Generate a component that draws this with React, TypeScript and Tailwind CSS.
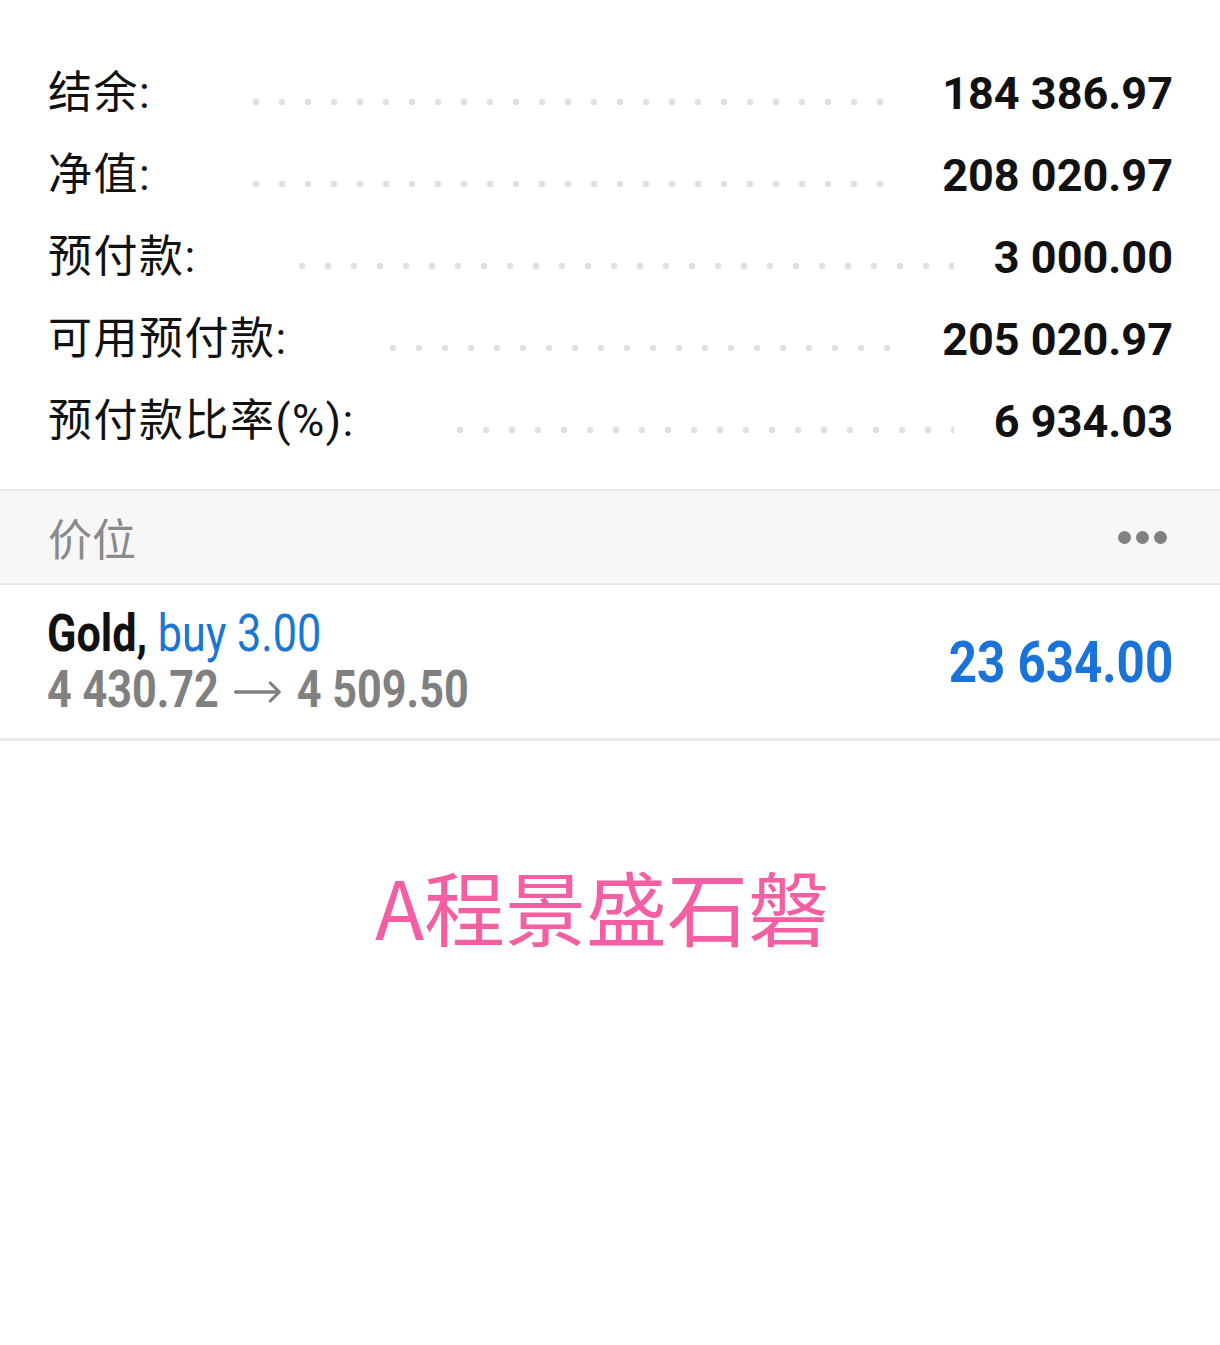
import React from 'react';

const rows = [
  { label: '结余:', value: '184 386.97' },
  { label: '净值:', value: '208 020.97' },
  { label: '预付款:', value: '3 000.00' },
  { label: '可用预付款:', value: '205 020.97' },
  { label: '预付款比率(%):', value: '6 934.03' },
];

export default function App() {
  return (
    <div className="w-[1220px] h-[1345px] bg-white overflow-hidden">
      {/* account summary */}
      <div className="pt-[52px] pb-[27px]">
        {rows.map((r) => (
          <div key={r.label} className="h-[82px] pl-[48px] pr-[47px] flex items-center">
            <div className="text-[44px] text-[#111] leading-none tracking-[1.5px] font-['Roboto','Noto_Sans_CJK_SC',sans-serif]">
              {r.label}
            </div>
            <div className="flex-1 h-[8px] mt-[18px] ml-[92px] mr-[40px] bg-[radial-gradient(circle,#e0e0e0_3px,transparent_3.6px)] bg-[length:26px_8px] bg-repeat-x" />
            <div className="text-[45px] font-bold text-[#111] leading-none font-['Roboto',sans-serif]">
              {r.value}
            </div>
          </div>
        ))}
      </div>

      {/* positions header */}
      <div className="h-[96px] border-y-2 border-[#e8e8e8] bg-[#f7f7f7] px-[48px] flex items-center justify-between">
        <div className="text-[44px] text-[#8a8a8a] leading-none font-['Noto_Sans_CJK_SC',sans-serif]">价位</div>
        <div className="flex gap-[5px] mr-[5px]">
          <span className="w-[13px] h-[13px] rounded-full bg-[#808080]" />
          <span className="w-[13px] h-[13px] rounded-full bg-[#808080]" />
          <span className="w-[13px] h-[13px] rounded-full bg-[#808080]" />
        </div>
      </div>

      {/* position row */}
      <div className="h-[156px] border-b-[3px] border-[#ebebeb] pl-[47px] pr-[47px] flex items-center justify-between font-['Roboto',sans-serif]">
        <div className="flex flex-col">
          <div className="origin-left scale-x-[0.83] whitespace-nowrap text-[52px] leading-[56px]">
            <span className="font-bold text-[#111]">Gold, </span>
            <span className="text-[#1976d2]">buy 3.00</span>
          </div>
          <div className="origin-left scale-x-[0.83] whitespace-nowrap text-[52px] leading-[56px] font-bold text-[#808080] flex items-center">
            <span>4 430.72</span>
            <svg width="58" height="24" viewBox="0 0 58 24" className="mx-[18px] mt-[4px]" fill="none" stroke="#808080" strokeWidth="3.5" strokeLinecap="round" strokeLinejoin="round">
              <path d="M2 12 H54" />
              <path d="M44 3 L55 12 L44 21" />
            </svg>
            <span>4 509.50</span>
          </div>
        </div>
        <div className="origin-right scale-x-[0.85] whitespace-nowrap text-[58px] leading-none font-bold text-[#1a73d8]">
          23 634.00
        </div>
      </div>

      {/* watermark */}
      <div className="mt-[123px] pr-[16px] text-center text-[81px] leading-none text-[#f45ea2] font-['Noto_Sans_CJK_SC',sans-serif]">
        A程景盛石磐
      </div>
    </div>
  );
}
